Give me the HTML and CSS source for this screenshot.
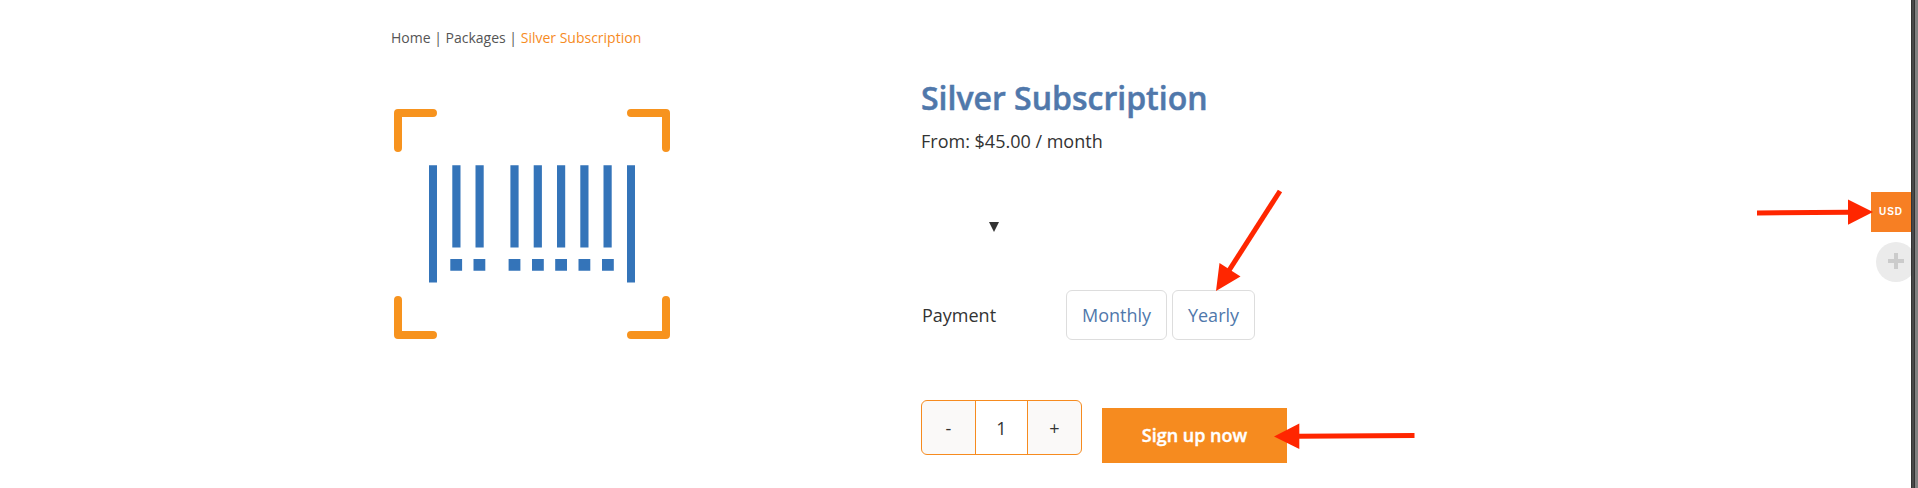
FILE: index.html
```html
<!DOCTYPE html>
<html>
<head>
	<title>Silver Subscription</title>
	<meta charset="UTF-8">
	<link rel="stylesheet" href="styles.css">
</head>
<body>
	<div id="page">
		<div class="breadcrumb"><a>Home</a> | <a>Packages</a> | <span>Silver Subscription</span></div>
		<div class="product">
			<div class="gallery">
				<svg width="276" height="230" viewBox="394 109 276 230">
					<g fill="none" stroke="#f7931e" stroke-width="8" stroke-linecap="round" stroke-linejoin="round">
						<path d="M398 148V113H433"/>
						<path d="M631 113H666V148"/>
						<path d="M398 300V335H433"/>
						<path d="M631 335H666V300"/>
					</g>
					<g fill="#3474b9">
						<path d="M429 165.3h8v117.2h-8zM627 165.3h8v117.2h-8z"/>
						<path d="M452.3 165.3h8.2v82.2h-8.2zM475.5 165.3h8.2v82.2h-8.2zM510.4 165.3h8.2v82.2h-8.2zM533.7 165.3h8.2v82.2h-8.2zM557 165.3h8.2v82.2h-8.2zM580.3 165.3h8.2v82.2h-8.2zM603.5 165.3h8.2v82.2h-8.2z"/>
						<path d="M450.3 259h11.8v11.8h-11.8zM473.5 259h11.8v11.8h-11.8zM508.6 259h11.8v11.8h-11.8zM532 259h11.8v11.8h-11.8zM555.2 259h11.8v11.8h-11.8zM578.5 259h11.8v11.8h-11.8zM602 259h11.8v11.8h-11.8z"/>
					</g>
				</svg>
			</div>
			<div class="summary">
				<h1>Silver Subscription</h1>
				<p class="price">From: $45.00 / month</p>
				<div class="toggle"><svg width="10" height="10"><path d="M0 0h10L5 10z" fill="#333"/></svg></div>
				<div class="payment">
					<label>Payment</label>
					<span class="option">Monthly</span>
					<span class="option yearly">Yearly</span>
				</div>
				<div class="cart">
					<div class="qty">
						<span class="minus">-</span>
						<span class="num">1</span>
						<span class="plus">+</span>
					</div>
					<div class="signup">Sign up now</div>
				</div>
			</div>
		</div>
	</div>
	<div id="side">
		<div class="currency">USD</div>
		<div class="more"><svg width="16" height="16"><path d="M6 0h4v6h6v4h-6v6h-4v-6h-6v-4h6z" fill="#cbcbcb"/></svg></div>
	</div>
	<div id="edge"></div>
	<svg id="arrows" width="1918" height="488">
		<g fill="none" stroke="#ff2600" stroke-width="5">
			<path d="M1280 191L1228 272"/>
			<path d="M1414.500 435.500L1298 436.300"/>
			<path d="M1757 213L1849 212.300"/>
		</g>
		<g fill="#ff2600">
			<path d="M1216 291L1219.500 263L1240.500 276.500z"/>
			<path d="M1274 436.500L1299.300 423.500L1299.300 449z"/>
			<path d="M1873 212L1848 199.500L1848 224.700z"/>
		</g>
	</svg>
</body>
</html>
```

FILE: styles.css
```css
*{
	margin: 0;
	padding: 0;
	box-sizing: border-box;
}
body{
	height: 488px;
	background: #fff;
	color: #333;
	font-family: "Open Sans", sans-serif;
	font-size: 18px;
	position: relative;
	overflow: hidden;
}
#page{
	width: 1136px;
	margin: 0 0 0 391px;
	padding-top: 28px;
}
.breadcrumb{
	height: 20px;
	line-height: 20px;
	font-size: 14px;
	color: #555;
}
.breadcrumb span{
	color: #f68b1f;
}
.product{
	display: grid;
	grid-template-columns: 530px 1fr;
}
.gallery{
	padding: 61px 0 0 3px;
}
.gallery svg{
	display: block;
}
h1{
	margin-top: 28px;
	height: 44px;
	line-height: 44px;
	font-size: 32px;
	font-weight: 600;
	color: #5078ab;
	-webkit-text-stroke: 0.5px #5078ab;
}
.price{
	margin-top: 9px;
	line-height: 24px;
}
.toggle{
	height: 68px;
	margin-top: 69px;
	padding-left: 68px;
}
.toggle svg{
	display: block;
}
.payment{
	display: flex;
	height: 50px;
	line-height: 50px;
}
.payment label{
	width: 145px;
	padding-left: 1px;
}
.option{
	width: 101px;
	height: 50px;
	line-height: 48px;
	border: 1px solid #ddd;
	border-radius: 6px;
	text-align: center;
	color: #5078ab;
}
.yearly{
	width: 83px;
	margin-left: 5px;
}
.cart{
	display: flex;
	margin-top: 60px;
}
.qty{
	display: flex;
	width: 161px;
	height: 55px;
	line-height: 55px;
	border: 1px solid #f68b1f;
	border-radius: 6px;
	background: #faf9f8;
	text-align: center;
	overflow: hidden;
}
.qty span{
	width: 53px;
}
.qty .num{
	background: #fff;
	border-left: 1px solid #f68b1f;
	border-right: 1px solid #f68b1f;
}
.signup{
	width: 185px;
	height: 55px;
	line-height: 55px;
	margin: 8px 0 0 20px;
	background: #f68b1f;
	color: #fff;
	font-weight: 600;
	text-align: center;
	-webkit-text-stroke: 0.4px #fff;
}
#side{
	width: 47px;
	position: absolute;
	top: 192px;
	right: 0;
}
.currency{
	width: 40px;
	height: 40px;
	line-height: 40px;
	background: #f77f23;
	color: #fff;
	font-family: "Liberation Sans", sans-serif;
	font-size: 10px;
	font-weight: bold;
	letter-spacing: 1px;
	text-align: center;
}
.more{
	width: 40px;
	height: 40px;
	margin: 10px 0 0 5px;
	padding: 11px 0 0 12px;
	border-radius: 50%;
	background: #ebebeb;
}
.more svg{
	display: block;
}
#edge{
	width: 7px;
	height: 488px;
	position: absolute;
	top: 0;
	right: 0;
	background: linear-gradient(to right, #333 1px, #484848 1px, #484848 3px, #333 3px, #333 4px, #808080 4px);
}
#arrows{
	position: absolute;
	top: 0;
	left: 0;
}
```
